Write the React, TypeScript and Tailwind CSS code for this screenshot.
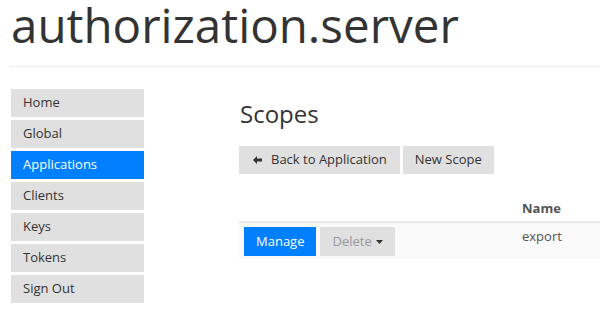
import React from "react";

const nav = ["Home", "Global", "Applications", "Clients", "Keys", "Tokens", "Sign Out"];

export default function App() {
  return (
    <div className="w-[600px] h-[322px] overflow-hidden bg-white text-[#333] font-['Open_Sans',sans-serif]">
      <div className="pl-[10px]">
        <h1 className="text-[47.5px] leading-none pt-[1px] pl-[1px] h-[66px] flex items-start whitespace-nowrap">authorization.server</h1>
        <div className="h-px bg-[#eee]" />
        <div className="flex mt-[22px]">
          <nav className="w-[133px] ml-[1px] flex flex-col gap-[3px] shrink-0">
            {nav.map((n) => (
              <div
                key={n}
                className={`h-[28px] flex items-center pl-[12px] text-[13px] ${n === "Applications" ? "bg-[#0080ff] text-white" : "bg-[#e0e0e0] text-[#333]"}`}
              >
                {n}
              </div>
            ))}
          </nav>
          <main className="ml-[95px] flex-1 min-w-0">
            <h2 className="text-[24px] leading-none mt-[13px] pl-[1px]">Scopes</h2>
            <div className="flex gap-[3px] mt-[20px]">
              <button className="h-[28px] pl-[14px] pr-[13px] bg-[#e0e0e0] text-[13px] flex items-center gap-[9px]">
                <svg width="9" height="8" viewBox="0 0 9 8" fill="#333">
                  <path d="M0 4 L4 0 L4 2.5 L9 2.5 L9 5.5 L4 5.5 L4 8 Z" />
                </svg>
                Back to Application
              </button>
              <button className="h-[28px] px-[12px] bg-[#e0e0e0] text-[13px]">New Scope</button>
            </div>
            <div className="mt-[23px] w-[480px]">
              <div className="flex h-[24px] items-center">
                <div className="w-[271px]" />
                <div className="pl-[12px] text-[13px] font-bold text-[#555]">Name</div>
              </div>
              <div className="border-t-2 border-[#e8e8e8] bg-[#f9f9f9] flex h-[38px]">
                <div className="w-[271px] flex gap-[4px] pl-[5px] pt-[4px]">
                  <button className="h-[29px] px-[12px] bg-[#0080ff] text-white text-[13px]">Manage</button>
                  <button className="h-[29px] px-[12px] bg-[#e0e0e0] text-[#999] text-[13px] flex items-center gap-[4px]">
                    Delete
                    <svg width="7" height="4" viewBox="0 0 7 4" fill="#333">
                      <path d="M0 0 L7 0 L3.5 4 Z" />
                    </svg>
                  </button>
                </div>
                <div className="pl-[12px] pt-[4px] text-[13px] text-[#555]">export</div>
              </div>
            </div>
          </main>
        </div>
      </div>
    </div>
  );
}
